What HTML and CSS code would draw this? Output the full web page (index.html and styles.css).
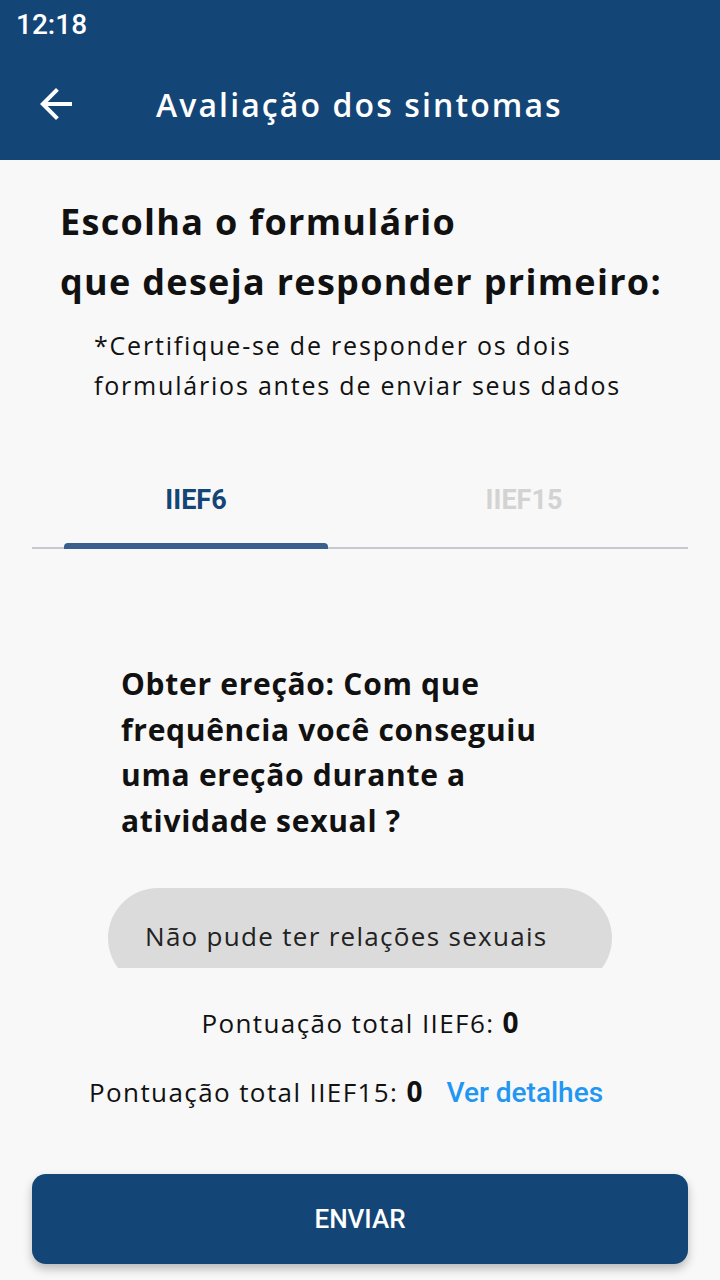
FILE: index.html
```html
<!DOCTYPE html>
<html lang="pt">

<head>
    <meta charset="UTF-8">
    <meta name="viewport" content="width=device-width, initial-scale=1.0">
    <title>Avaliação dos sintomas</title>
    <link rel="stylesheet" href="styles.css">
</head>

<body>
    <div class="screen">
        <!--barra de status-->
        <div class="status">12:18</div>

        <!--barra superior-->
        <div class="appbar">
            <svg class="back" viewBox="0 0 24 24" width="48" height="48">
                <path d="M20 11H7.83l5.59-5.59L12 4l-8 8 8 8 1.41-1.41L7.83 13H20v-2z" fill="#fff" />
            </svg>
            <div class="appbar-title">Avaliação dos sintomas</div>
        </div>

        <div class="content">
            <h1 class="title">Escolha o formulário<br>que deseja responder primeiro:</h1>
            <p class="note">*Certifique-se de responder os dois<br>formulários antes de enviar seus dados</p>

            <!--abas-->
            <div class="tabs">
                <div class="tab active">IIEF6<span class="indicator"></span></div>
                <div class="tab">IIEF15</div>
            </div>

            <p class="question">Obter ereção: Com que<br>frequência você conseguiu<br>uma ereção durante a<br>atividade sexual ?</p>

            <!--opções (lista rolável)-->
            <div class="options">
                <div class="option">Não pude ter relações sexuais</div>
            </div>

            <div class="scores">
                <p class="score">Pontuação total IIEF6: <b>0</b></p>
                <p class="score">Pontuação total IIEF15: <b>0</b><a class="details" href="javascript:;">Ver detalhes</a></p>
            </div>

            <button class="send">ENVIAR</button>
        </div>
    </div>
</body>

</html>
```

FILE: styles.css
```css
* {
    margin: 0;
    padding: 0;
    box-sizing: border-box;
}

body {
    background-color: #f8f8f8;
    font-family: "Open Sans", "Noto Sans", sans-serif;
    color: #111;
}

.screen {
    width: 720px;
    height: 1280px;
    display: flex;
    flex-direction: column;
    overflow: hidden;
}

/*barra de status*/
.status {
    height: 48px;
    background-color: #134577;
    color: #fff;
    font-family: "Roboto", sans-serif;
    font-weight: 500;
    font-size: 28px;
    padding-left: 16px;
    display: flex;
    align-items: center;
}

.appbar {
    height: 112px;
    background-color: #134577;
    display: flex;
    align-items: center;
    padding-left: 32px;
}

.appbar .back {
    display: block;
}

.appbar-title {
    color: #fff;
    font-size: 32px;
    font-weight: 600;
    margin-left: 76px;
    letter-spacing: 2.1px;
}

.content {
    flex: 1;
    display: flex;
    flex-direction: column;
    padding: 32px 32px 16px;
}

.title {
    font-size: 36px;
    font-weight: 700;
    line-height: 60px;
    padding-left: 28px;
    letter-spacing: 1.3px;
}

.note {
    font-size: 25px;
    line-height: 40px;
    padding-left: 62px;
    margin-top: 13px;
    letter-spacing: 1.8px;
}

/*abas*/
.tabs {
    margin-top: 47px;
    display: flex;
    border-bottom: 2px solid #c6c9d4;
}

.tab {
    flex: 1;
    height: 95px;
    display: flex;
    align-items: center;
    justify-content: center;
    font-family: "Roboto", sans-serif;
    font-weight: 700;
    font-size: 27px;
    color: #d3d3d3;
    position: relative;
}

.tab.active {
    color: #134577;
}

.indicator {
    position: absolute;
    left: 32px;
    right: 32px;
    bottom: -2px;
    height: 6px;
    background-color: #3a5f8f;
    border-radius: 4px 4px 0 0;
}

.question {
    margin-top: 112px;
    padding-left: 89px;
    font-size: 30px;
    font-weight: 700;
    line-height: 45.5px;
    letter-spacing: 0.7px;
}

.options {
    margin-top: 45px;
    height: 80px;
    overflow: hidden;
    padding-left: 76px;
}

.option {
    width: 504px;
    height: 100px;
    border-radius: 50px;
    background-color: #dbdbdb;
    font-size: 26px;
    color: #222;
    padding: 30px 0 0 37px;
    letter-spacing: 1.3px;
}

.scores {
    margin-top: 34px;
    text-align: center;
}

.score {
    font-size: 26px;
    line-height: 40px;
    letter-spacing: 1.4px;
}

.score b {
    font-size: 28px;
    letter-spacing: 0;
}

.score + .score {
    margin-top: 28px;
    text-align: left;
    padding-left: 57px;
}

.details {
    margin-left: 24px;
    font-family: "Roboto", sans-serif;
    font-weight: 500;
    font-size: 28px;
    color: #2196f3;
    text-decoration: none;
    letter-spacing: 0;
}

.send {
    margin-top: auto;
    height: 90px;
    border: none;
    border-radius: 14px;
    background-color: #134577;
    color: #fff;
    font-family: "Roboto", sans-serif;
    font-weight: 500;
    font-size: 26px;
    box-shadow: 0 5px 10px rgba(0, 0, 0, 0.25);
}
```
